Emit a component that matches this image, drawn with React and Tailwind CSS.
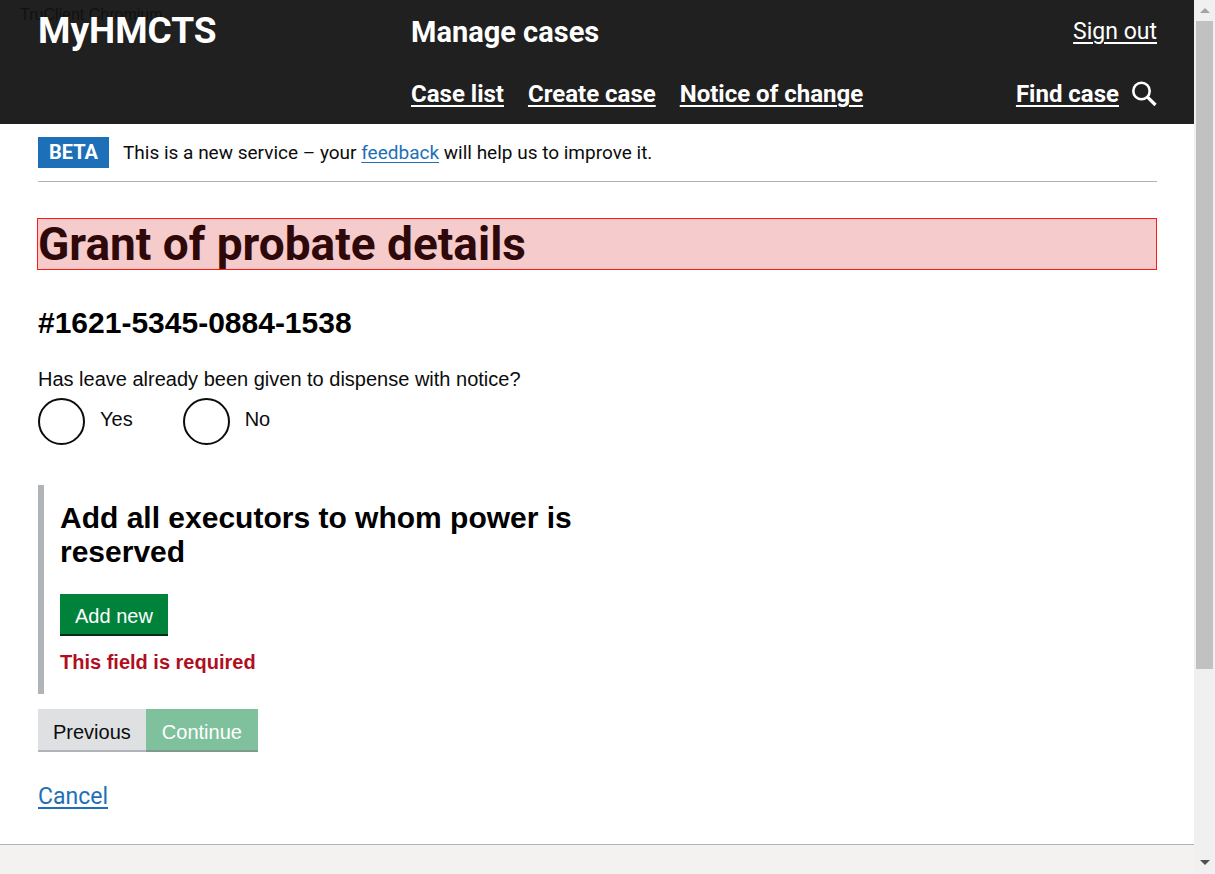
const navLinks = ["Case list", "Create case", "Notice of change"];

const linkClass = "underline underline-offset-3 decoration-2";

function Header() {
  return (
    <header className="relative h-[124px] bg-[#202020] pr-[37px] pl-[38px] font-['Roboto',sans-serif] text-white">
      <span className="absolute left-5 top-[5px] font-['Liberation_Sans',sans-serif] text-base leading-5 text-[#111111]">
        TruClient Chromium
      </span>
      <div className="relative grid grid-cols-3">
        <div className="pt-2">
          <a href="#home" className="text-[37px] leading-[46px] font-bold">
            MyHMCTS
          </a>
        </div>
        <div className="col-span-2 pt-4">
          <div className="flex items-center justify-between">
            <a href="#manage" className="text-[29px] leading-8 font-bold">
              Manage cases
            </a>
            <a href="#sign-out" className={`text-[23px] leading-8 ${linkClass}`}>
              Sign out
            </a>
          </div>
          <nav className="mt-[30px] flex items-center text-2xl leading-8 font-bold">
            <ul className="flex gap-6">
              {navLinks.map((label) => (
                <li key={label}>
                  <a href="#nav" className={linkClass}>
                    {label}
                  </a>
                </li>
              ))}
            </ul>
            <a href="#find" className="ml-auto flex items-center gap-3">
              <span className={linkClass}>Find case</span>
              <svg className="h-[26px] w-[26px]" viewBox="0 0 26 26" fill="none" stroke="currentColor" aria-hidden="true">
                <circle cx="10.5" cy="10" r="8.2" strokeWidth="2.6" />
                <path d="M16.3 15.8l8.2 8.2" strokeWidth="3.2" />
              </svg>
            </a>
          </nav>
        </div>
      </div>
    </header>
  );
}

function PhaseBanner() {
  return (
    <div className="flex items-center gap-[14px] border-b border-[#b1b4b6] py-[13px] font-['Roboto',sans-serif]">
      <strong className="bg-[#1d70b8] px-[11px] text-xl leading-[31px] text-white">BETA</strong>
      <p className="text-[19px] leading-[31px]">
        This is a new service – your{" "}
        <a href="#feedback" className="text-[#1d70b8] underline underline-offset-3">
          feedback
        </a>{" "}
        will help us to improve it.
      </p>
    </div>
  );
}

function Radio({ label }) {
  return (
    <label className="flex items-center gap-[15px]">
      <input
        type="radio"
        name="leave"
        className="size-[47px] appearance-none rounded-full border-2 border-[#0b0c0c] bg-white"
      />
      <span className="pb-1.5">{label}</span>
    </label>
  );
}

function Scrollbar() {
  return (
    <div className="flex w-[21px] shrink-0 flex-col items-center bg-[#f0f0f0]" aria-hidden="true">
      <svg className="my-[8px] h-[5px] w-[10px]" viewBox="0 0 10 5">
        <path d="M0 5L5 0L10 5z" fill="#a3a3a3" />
      </svg>
      <div className="mr-px h-[648px] w-[17px] bg-[#c1c1c1]" />
      <svg className="mt-auto mb-[9px] h-[5px] w-[10px]" viewBox="0 0 10 5">
        <path d="M0 0L5 5L10 0z" fill="#505050" />
      </svg>
    </div>
  );
}

export default function App() {
  return (
    <div className="flex min-h-screen bg-white text-[#0b0c0c]">
      <div className="flex grow flex-col">
        <Header />
        <main className="pr-[37px] pl-[38px] font-['Liberation_Sans',Arial,sans-serif] text-xl leading-6">
          <PhaseBanner />
          <h1 className="-ml-px mt-9 border border-[#ff1a1a] bg-[#f5cbcb] font-['Roboto',sans-serif] text-[46px] leading-[50px] font-bold text-[#2f090a]">
            Grant of probate details
          </h1>
          <h2 className="mt-[35px] text-[30px] leading-9 font-bold text-black">#1621-5345-0884-1538</h2>
          <fieldset className="mt-[26px]">
            <legend>Has leave already been given to dispense with notice?</legend>
            <div className="mt-[7px] flex gap-[50px]">
              <Radio label="Yes" />
              <Radio label="No" />
            </div>
          </fieldset>
          <section className="mt-10 border-l-6 border-[#b1b4b6] pt-4 pb-5 pl-4">
            <h2 className="max-w-[540px] text-[30px] leading-[34px] font-bold text-black">
              Add all executors to whom power is reserved
            </h2>
            <button
              type="button"
              className="mt-[25px] block border-b-2 border-[#002d18] bg-[#00823b] px-[15px] pt-[10px] pb-1.5 text-white"
            >
              Add new
            </button>
            <p className="mt-[14px] font-bold text-[#b10e1e]">This field is required</p>
          </section>
          <div className="mt-[15px] flex">
            <button type="button" className="border-b-2 border-[#b1b4bb] bg-[#dee0e2] pt-[11px] pb-1.5 px-[15px]">
              Previous
            </button>
            <button
              type="button"
              disabled
              className="border-b-2 border-[#7f9a8c] bg-[#80c19d] px-4 pt-[11px] pb-1.5 text-white"
            >
              Continue
            </button>
          </div>
          <p className="mt-[29px] font-['Roboto',sans-serif] text-[23px] leading-8">
            <a href="#cancel" className={`text-[#1d70b8] ${linkClass}`}>
              Cancel
            </a>
          </p>
        </main>
        <footer className="mt-[31px] grow border-t border-[#b1b4b6] bg-[#f3f2f1]" />
      </div>
      <Scrollbar />
    </div>
  );
}
